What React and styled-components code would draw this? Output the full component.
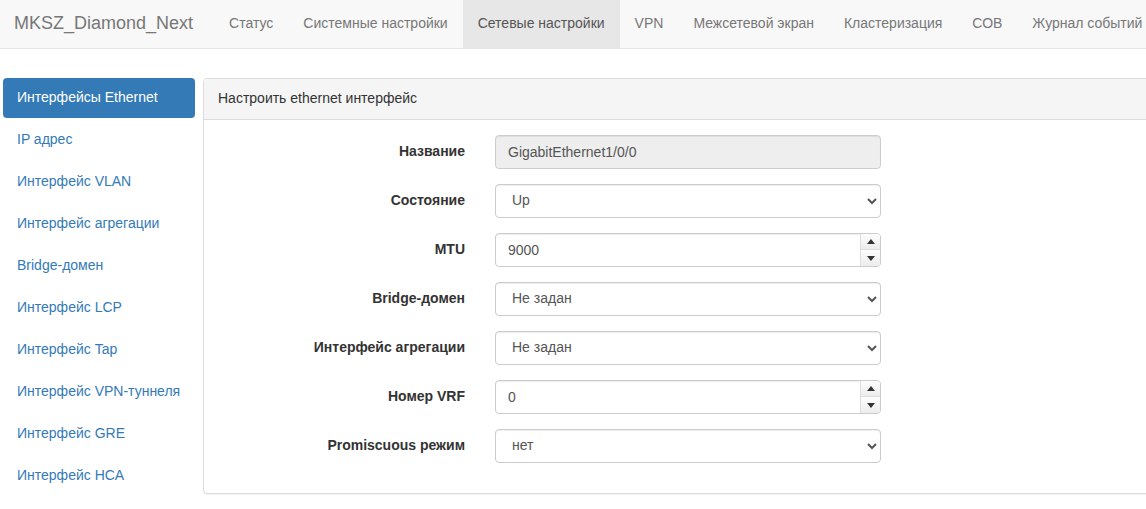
import styled, { createGlobalStyle } from "styled-components";

const GlobalStyle = createGlobalStyle`
  html, body {
    margin: 0;
    padding: 0;
    overflow: hidden;
    background: #fff;
  }
  body {
    font-family: "Liberation Sans", Arial, sans-serif;
    font-size: 14px;
    line-height: 1.42857;
    color: #333;
  }
  * {
    box-sizing: border-box;
  }
`;

const Page = styled.div`
  width: 1400px;
`;

const Navbar = styled.nav`
  display: flex;
  align-items: stretch;
  height: 49px;
  background: #f8f8f8;
  border-bottom: 1px solid #e7e7e7;
`;

const Brand = styled.a`
  display: flex;
  align-items: center;
  padding: 0 21px 0 14px;
  font-size: 18px;
  color: #777;
  text-decoration: none;
  white-space: nowrap;
`;

const NavItem = styled.a`
  display: flex;
  align-items: center;
  padding: 0 15px;
  text-decoration: none;
  white-space: nowrap;
  background: ${(p) => (p.$active ? "#e7e7e7" : "transparent")};
  color: ${(p) => (p.$active ? "#555" : "#777")};
`;

const Body = styled.div`
  display: flex;
  align-items: flex-start;
  gap: 8px;
  padding: 29px 0 0 3px;
`;

const Sidebar = styled.ul`
  list-style: none;
  margin: 0;
  padding: 0;
  width: 192px;
  flex: none;
`;

const Pill = styled.li`
  margin-bottom: 2px;
  padding: 10px 14px;
  border-radius: 4px;
  white-space: nowrap;
  background: ${(p) => (p.$active ? "#337ab7" : "transparent")};
  color: ${(p) => (p.$active ? "#fff" : "#337ab7")};
`;

const Panel = styled.section`
  flex: 1;
  border: 1px solid #ddd;
  border-radius: 4px;
  background: #fff;
  box-shadow: 0 1px 1px rgba(0, 0, 0, 0.05);
`;

const PanelHeading = styled.div`
  padding: 10px 14px;
  background: #f5f5f5;
  border-bottom: 1px solid #ddd;
  border-radius: 3px 3px 0 0;
  color: #333;
`;

const PanelBody = styled.div`
  padding: 15px;
`;

const FormRow = styled.div`
  display: grid;
  grid-template-columns: 246px 386px;
  column-gap: 30px;
  align-items: center;
  margin-bottom: 15px;
`;

const Label = styled.label`
  text-align: right;
  font-weight: bold;
  color: #333;
`;

const Field = styled.div`
  position: relative;
  height: 34px;
`;

const TextInput = styled.input`
  width: 100%;
  height: 34px;
  padding: 6px 12px;
  border: 1px solid #ccc;
  border-radius: 4px;
  font: inherit;
  color: #555;
  background: ${(p) => (p.disabled ? "#eee" : "#fff")};
  box-shadow: inset 0 1px 1px rgba(0, 0, 0, 0.075);
  outline: none;
  -moz-appearance: textfield;

  &::-webkit-inner-spin-button,
  &::-webkit-outer-spin-button {
    -webkit-appearance: none;
    margin: 0;
  }
`;

const Select = styled.select`
  width: 100%;
  height: 34px;
  padding: 6px 12px 6px 16px;
  border: 1px solid #ccc;
  border-radius: 4px;
  font: inherit;
  color: #555;
  background: #fff;
  box-shadow: inset 0 1px 1px rgba(0, 0, 0, 0.075);
  appearance: none;
  -webkit-appearance: none;
  outline: none;
`;

const Chevron = styled.svg`
  position: absolute;
  right: 4px;
  top: 13px;
  width: 10px;
  height: 8px;
  pointer-events: none;
`;

const Spinner = styled.div`
  position: absolute;
  top: 1px;
  right: 1px;
  bottom: 1px;
  width: 20px;
  display: flex;
  flex-direction: column;
  border-left: 1px solid #ddd;
  border-radius: 0 3px 3px 0;
  overflow: hidden;
`;

const SpinButton = styled.div`
  flex: 1;
  display: flex;
  align-items: center;
  justify-content: center;
  background: linear-gradient(#fdfdfd, #ececec);
  border-top: ${(p) => (p.$down ? "1px solid #ddd" : "none")};
`;

const Triangle = styled.svg`
  width: 8px;
  height: 5px;
`;

const SelectField = ({ value }) => (
  <Field>
    <Select defaultValue={value}>
      <option>{value}</option>
    </Select>
    <Chevron viewBox="0 0 10 8">
      <path d="M1 2 L5 6 L9 2" fill="none" stroke="#555" strokeWidth="2" />
    </Chevron>
  </Field>
);

const NumberField = ({ value }) => (
  <Field>
    <TextInput type="number" defaultValue={value} />
    <Spinner>
      <SpinButton>
        <Triangle viewBox="0 0 8 5">
          <path d="M0 5 L4 0 L8 5 Z" fill="#333" />
        </Triangle>
      </SpinButton>
      <SpinButton $down>
        <Triangle viewBox="0 0 8 5">
          <path d="M0 0 L4 5 L8 0 Z" fill="#333" />
        </Triangle>
      </SpinButton>
    </Spinner>
  </Field>
);

const navItems = [
  "Статус",
  "Системные настройки",
  "Сетевые настройки",
  "VPN",
  "Межсетевой экран",
  "Кластеризация",
  "СОВ",
  "Журнал событий",
];

const sideItems = [
  "Интерфейсы Ethernet",
  "IP адрес",
  "Интерфейс VLAN",
  "Интерфейс агрегации",
  "Bridge-домен",
  "Интерфейс LCP",
  "Интерфейс Tap",
  "Интерфейс VPN-туннеля",
  "Интерфейс GRE",
  "Интерфейс HCA",
];

const App = () => {
  return (
    <Page>
      <GlobalStyle />
      <Navbar>
        <Brand>MKSZ_Diamond_Next</Brand>
        {navItems.map((item) => (
          <NavItem key={item} $active={item === "Сетевые настройки"}>
            {item}
          </NavItem>
        ))}
      </Navbar>
      <Body>
        <Sidebar>
          {sideItems.map((item, i) => (
            <Pill key={item} $active={i === 0}>
              {item}
            </Pill>
          ))}
        </Sidebar>
        <Panel>
          <PanelHeading>Настроить ethernet интерфейс</PanelHeading>
          <PanelBody>
            <FormRow>
              <Label>Название</Label>
              <Field>
                <TextInput type="text" value="GigabitEthernet1/0/0" disabled readOnly />
              </Field>
            </FormRow>
            <FormRow>
              <Label>Состояние</Label>
              <SelectField value="Up" />
            </FormRow>
            <FormRow>
              <Label>MTU</Label>
              <NumberField value="9000" />
            </FormRow>
            <FormRow>
              <Label>Bridge-домен</Label>
              <SelectField value="Не задан" />
            </FormRow>
            <FormRow>
              <Label>Интерфейс агрегации</Label>
              <SelectField value="Не задан" />
            </FormRow>
            <FormRow>
              <Label>Номер VRF</Label>
              <NumberField value="0" />
            </FormRow>
            <FormRow>
              <Label>Promiscuous режим</Label>
              <SelectField value="нет" />
            </FormRow>
          </PanelBody>
        </Panel>
      </Body>
    </Page>
  );
};

export default App;
